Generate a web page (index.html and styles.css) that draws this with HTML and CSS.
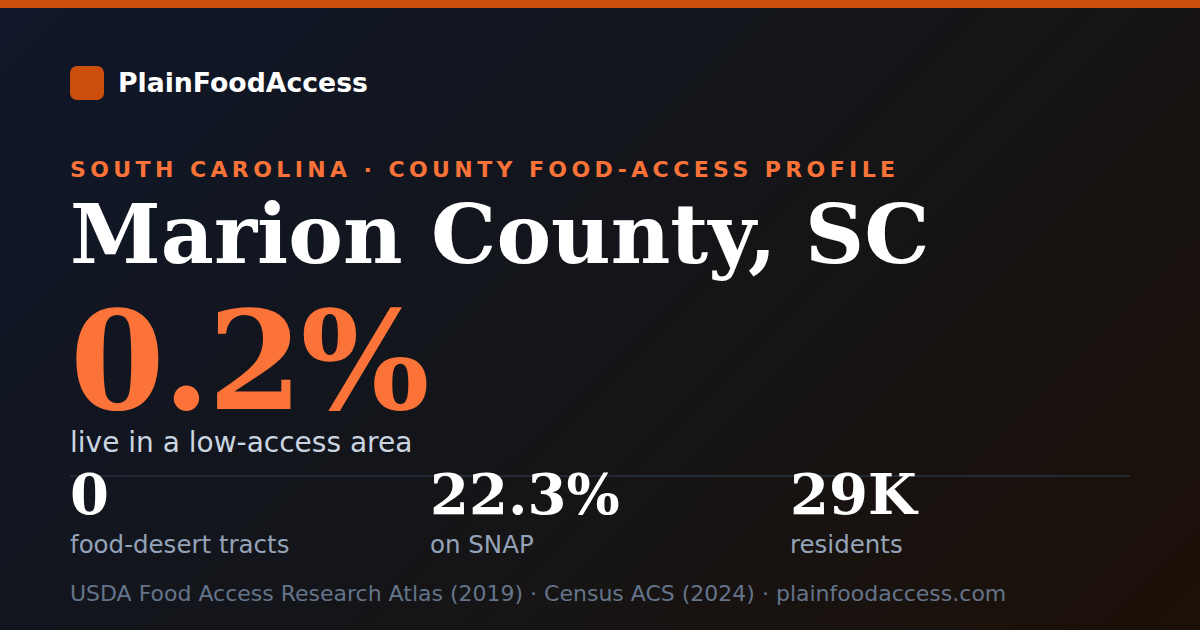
FILE: index.html
```html
<!DOCTYPE html>
<html lang="en">
<head>
<meta charset="utf-8">
<title>Marion County, SC · PlainFoodAccess</title>
<link rel="stylesheet" href="styles.css">
</head>
<body>
<div class="card">
  <div class="topbar"></div>
  <div class="content">
    <div class="brand">
      <span class="brand-mark"></span>
      <span class="brand-name">PlainFoodAccess</span>
    </div>
    <div class="eyebrow">SOUTH CAROLINA · COUNTY FOOD-ACCESS PROFILE</div>
    <h1 class="title">Marion County, SC</h1>
    <div class="hero">0.2%</div>
    <div class="hero-label">live in a low-access area</div>
    <div class="stats">
      <div class="stat">
        <div class="stat-value">0</div>
        <div class="stat-label">food-desert tracts</div>
      </div>
      <div class="stat">
        <div class="stat-value">22.3%</div>
        <div class="stat-label">on SNAP</div>
      </div>
      <div class="stat">
        <div class="stat-value">29K</div>
        <div class="stat-label">residents</div>
      </div>
    </div>
    <div class="source">USDA Food Access Research Atlas (2019) · Census ACS (2024) · plainfoodaccess.com</div>
  </div>
</div>
</body>
</html>
```
FILE: styles.css
```css
* { box-sizing: border-box; }
html, body { margin: 0; padding: 0; }
body {
  width: 1200px;
  height: 630px;
  overflow: hidden;
  font-family: "DejaVu Sans", "Liberation Sans", sans-serif;
}
.card {
  width: 1200px;
  height: 630px;
  background: linear-gradient(135deg, #0f172a 0%, #141519 50%, #1c1007 100%);
  display: flex;
  flex-direction: column;
}
.topbar {
  height: 8px;
  background: #cc4e0c;
  flex: none;
}
.content {
  padding: 58px 70px 0 70px;
  display: flex;
  flex-direction: column;
}
.brand {
  display: flex;
  align-items: center;
  gap: 14px;
  height: 34px;
}
.brand-mark {
  width: 34px;
  height: 34px;
  border-radius: 7px;
  background: #cc4e0c;
  flex: none;
}
.brand-name {
  font-size: 26.7px;
  font-weight: bold;
  color: #ffffff;
  line-height: 1;
}
.eyebrow {
  margin-top: 59px;
  font-size: 22px;
  line-height: 22px;
  font-weight: bold;
  letter-spacing: 0.2em;
  color: #fb7338;
}
.title {
  margin: 12px 0 0 0;
  font-family: "DejaVu Serif", "Liberation Serif", serif;
  font-size: 82px;
  line-height: 82px;
  font-weight: bold;
  color: #ffffff;
}
.hero {
  margin-top: 18px;
  font-family: "DejaVu Serif", "Liberation Serif", serif;
  font-size: 136px;
  line-height: 136px;
  font-weight: bold;
  letter-spacing: -2px;
  color: #fb7338;
}
.hero-label {
  margin-top: -3px;
  font-size: 28px;
  line-height: 34px;
  color: #cbd5e1;
}
.stats {
  margin-top: 15px;
  border-top: 2px solid #232a36;
  display: grid;
  grid-template-columns: 360px 360px 340px;
}
.stat-value {
  margin-top: -11px;
  font-family: "DejaVu Serif", "Liberation Serif", serif;
  font-size: 56px;
  line-height: 56px;
  font-weight: bold;
  color: #ffffff;
}
.stat-label {
  margin-top: 9px;
  font-size: 24.5px;
  line-height: 28px;
  color: #94a3b8;
}
.source {
  margin-top: 22px;
  font-size: 22px;
  line-height: 26px;
  color: #64748b;
}
```
